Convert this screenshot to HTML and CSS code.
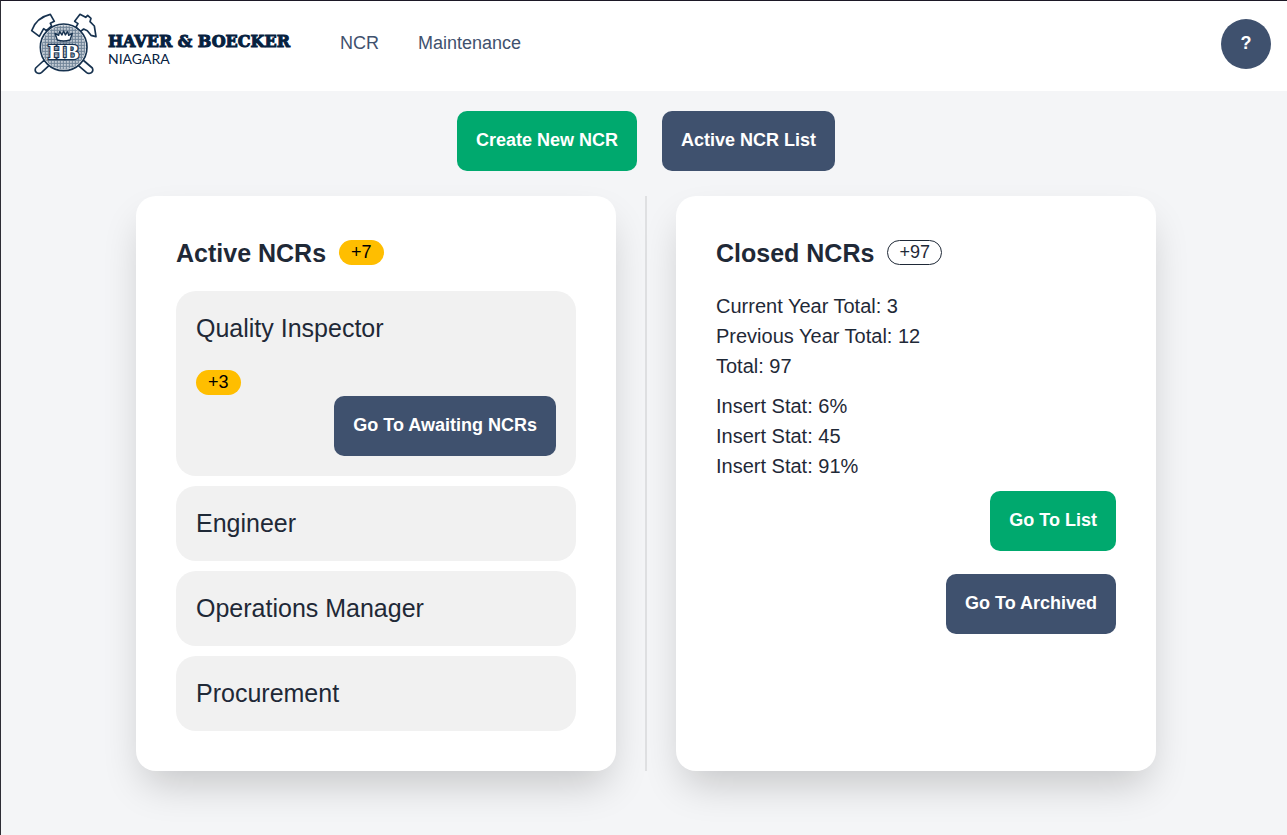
FILE: index.html
```html
<!DOCTYPE html>
<html lang="en">
<head>
  <meta charset="utf-8">
  <meta name="viewport" content="width=device-width, initial-scale=1">
  <title>NCR Dashboard</title>
  <link rel="stylesheet" href="styles.css">
</head>
<body>
  <header class="navbar">
    <a class="brand" href="#">
      <svg class="brand-mark" viewBox="30 24 201 186" aria-hidden="true">
        <defs>
          <pattern id="hatch" width="9" height="9" patternUnits="userSpaceOnUse">
            <rect width="9" height="9" fill="#c3ccd5"/>
            <path d="M0 4H9M4 0V9" stroke="#6f8397" stroke-width="3"/>
          </pattern>
        </defs>
        <g fill="#fff" stroke="#17324f" stroke-width="5" stroke-linejoin="round">
          <path d="M73 165L47 189Q43 199 50 203Q58 208 65 202L90 179Z"/>
          <path d="M189 165L217 189Q221 199 214 203Q206 208 199 202L172 179Z"/>
          <path d="M35 77Q48 38 91 28L103 49L91 55L95 63L79 77L71 71L58 94Z"/>
          <path d="M164 49L180 28L197 37L203 31L213 40L210 50L223 63L228 95L213 91L202 77L191 72L181 80L168 66L174 56Z"/>
          <circle cx="131" cy="127" r="70"/>
          <circle cx="131" cy="127" r="66" fill="url(#hatch)" stroke="none"/>
          <path d="M112 105L105 85L116 91L119 80L126 90L131 78L136 90L143 80L146 91L157 85L150 105Q131 111 112 105Z" stroke-width="4"/>
        </g>
        <text class="brand-letters" x="131" y="163" text-anchor="middle">HB</text>
      </svg>
      <span class="brand-text">
        <span class="brand-name">HAVER &amp; BOECKER</span>
        <span class="brand-place">NIAGARA</span>
      </span>
    </a>
    <nav class="nav-links">
      <a href="#">NCR</a>
      <a href="#">Maintenance</a>
    </nav>
    <button class="help" type="button" aria-label="Help">?</button>
  </header>

  <main class="content">
    <div class="actions">
      <button class="btn btn-green" type="button">Create New NCR</button>
      <button class="btn btn-navy" type="button">Active NCR List</button>
    </div>

    <div class="panels">
      <section class="card">
        <div class="card-head">
          <h2>Active NCRs</h2>
          <span class="badge badge-yellow">+7</span>
        </div>
        <div class="roles">
          <div class="role">
            <h3>Quality Inspector</h3>
            <div class="role-body">
              <span class="badge badge-yellow">+3</span>
              <button class="btn btn-navy push-right" type="button">Go To Awaiting NCRs</button>
            </div>
          </div>
          <div class="role"><h3>Engineer</h3></div>
          <div class="role"><h3>Operations Manager</h3></div>
          <div class="role"><h3>Procurement</h3></div>
        </div>
      </section>

      <div class="divider"></div>

      <section class="card">
        <div class="card-head">
          <h2>Closed NCRs</h2>
          <span class="badge badge-outline">+97</span>
        </div>
        <div class="stats">
          <div>
            <p>Current Year Total: 3</p>
            <p>Previous Year Total: 12</p>
            <p>Total: 97</p>
          </div>
          <div>
            <p>Insert Stat: 6%</p>
            <p>Insert Stat: 45</p>
            <p>Insert Stat: 91%</p>
          </div>
        </div>
        <div class="card-actions">
          <button class="btn btn-green" type="button">Go To List</button>
          <button class="btn btn-navy" type="button">Go To Archived</button>
        </div>
      </section>
    </div>
  </main>
</body>
</html>
```

FILE: styles.css
```css
* {
  box-sizing: border-box;
}

html {
  background: #f4f5f7;
}

body {
  margin: 0;
  min-height: 100vh;
  border-top: 1px solid #1c1826;
  border-left: 1px solid #2d2d35;
  font-family: "Liberation Sans", Arial, sans-serif;
  color: #1f2937;
}

h2,
h3,
p {
  margin: 0;
}

.navbar {
  display: flex;
  align-items: center;
  height: 90px;
  padding: 0 16px 4px 29px;
  background: #fff;
}

.brand {
  display: flex;
  align-items: center;
  gap: 11px;
  color: #06213f;
  text-decoration: none;
}

.brand-mark {
  width: 67px;
  height: 62px;
}

.brand-letters {
  font-family: "Liberation Serif", serif;
  font-size: 64px;
  font-weight: 700;
  fill: #fff;
  stroke: #17324f;
  stroke-width: 7px;
  paint-order: stroke;
}

.brand-text {
  display: flex;
  flex-direction: column;
  padding-top: 12px;
}

.brand-name {
  font: 700 16px/18px "DejaVu Serif", serif;
  -webkit-text-stroke: 1px #06213f;
  white-space: nowrap;
}

.brand-place {
  font: 400 14px/16px Lato, sans-serif;
}

.nav-links {
  display: flex;
  gap: 39px;
  margin-left: 50px;
  padding-bottom: 2px;
  font-size: 18px;
}

.nav-links a {
  color: #3f516e;
  text-decoration: none;
}

.help {
  width: 50px;
  height: 50px;
  margin-left: auto;
  padding: 0 0 2px;
  border: 0;
  border-radius: 50%;
  background: #3f516e;
  color: #fff;
  font: 700 18px/24px "Liberation Sans", Arial, sans-serif;
}

.content {
  padding: 20px 0 64px 4px;
}

.actions {
  display: flex;
  justify-content: center;
  gap: 25px;
  margin-bottom: 25px;
}

.btn {
  height: 60px;
  padding: 0 19px 2px;
  border: 0;
  border-radius: 10px;
  color: #fff;
  font: 700 18px/24px "Liberation Sans", Arial, sans-serif;
  white-space: nowrap;
}

.btn-green {
  background: #00a96e;
}

.btn-navy {
  background: #3f516e;
}

.panels {
  display: grid;
  grid-template-columns: 1fr 2px 1fr;
  gap: 29px;
  max-width: 1020px;
  margin: 0 auto;
}

.divider {
  background: #dfe0e2;
}

.card {
  padding: 40px;
  border-radius: 20px;
  background: #fff;
  box-shadow: 0 20px 40px -8px rgba(0, 0, 0, 0.2);
}

.card-head {
  display: flex;
  align-items: center;
  gap: 13px;
  margin-bottom: 20px;
}

.card-head h2 {
  font-size: 25px;
  line-height: 35px;
}

.badge {
  height: 25px;
  padding: 0 12px;
  border-radius: 13px;
  font-size: 18px;
  line-height: 24px;
}

.card-head .badge {
  margin-bottom: 2px;
}

.badge-yellow {
  background: #ffbe00;
  color: #000;
}

.badge-outline {
  padding: 0 11px;
  border: 1px solid #1f2937;
  line-height: 22px;
}

.roles {
  display: grid;
  gap: 10px;
}

.role {
  padding: 20px;
  border-radius: 20px;
  background: #f1f1f1;
}

.role h3 {
  font-size: 25px;
  font-weight: 400;
  line-height: 35px;
}

.role-body {
  display: flex;
  flex-direction: column;
  align-items: flex-start;
  gap: 1px;
  margin-top: 24px;
}

.push-right {
  align-self: flex-end;
}

.stats {
  display: grid;
  gap: 10px;
  font-size: 20px;
  line-height: 30px;
}

.card-actions {
  display: flex;
  flex-direction: column;
  align-items: flex-end;
  gap: 23px;
  margin-top: 10px;
}
```
